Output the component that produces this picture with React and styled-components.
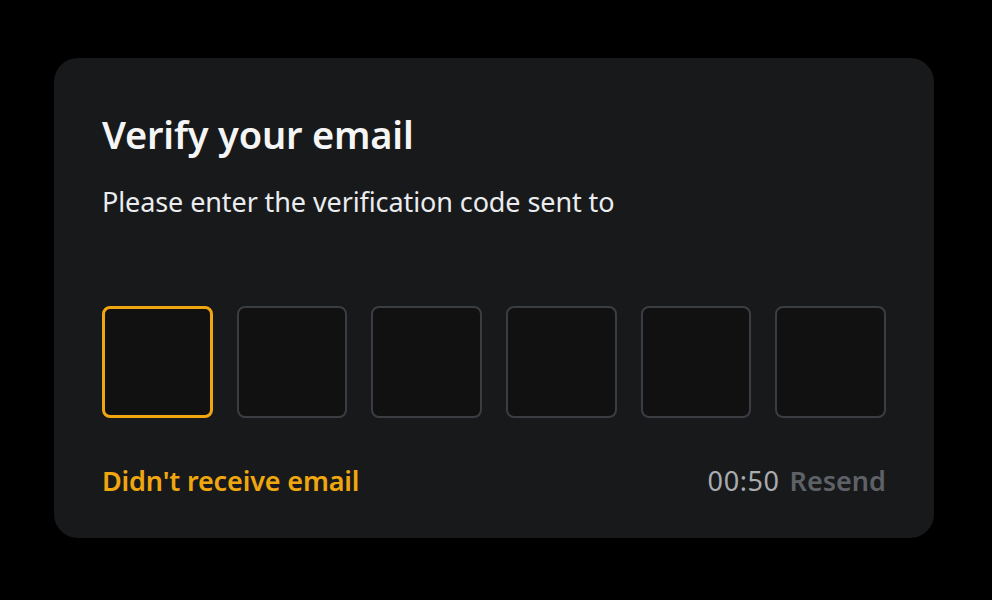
import React from "react";
import styled, { createGlobalStyle } from "styled-components";

const GlobalStyle = createGlobalStyle`
  html, body {
    margin: 0;
    padding: 0;
    background: #000;
  }
  body {
    font-family: "Noto Sans", "Open Sans", sans-serif;
  }
`;

const Page = styled.div`
  width: 992px;
  height: 600px;
  box-sizing: border-box;
  padding: 58px 58px 62px 54px;
  background: #000;
`;

const Card = styled.div`
  width: 880px;
  height: 480px;
  box-sizing: border-box;
  padding: 52px 48px 0 48px;
  background: #18191b;
  border-radius: 24px;
  display: flex;
  flex-direction: column;
`;

const Title = styled.h2`
  margin: 0;
  font-size: 38px;
  line-height: 48px;
  font-weight: 600;
  color: #f5f5f5;
  letter-spacing: -0.2px;
`;

const Subtitle = styled.p`
  margin: 26px 0 0 0;
  font-size: 27px;
  line-height: 36px;
  font-weight: 400;
  color: #eaecef;
  letter-spacing: -0.1px;
`;

const CodeRow = styled.div`
  margin-top: 86px;
  display: grid;
  grid-template-columns: repeat(6, 1fr);
  gap: 24px;
`;

const CodeBox = styled.input`
  box-sizing: border-box;
  height: 112px;
  width: 100%;
  margin: 0;
  background: #111111;
  border: ${(p) => (p.$active ? "3px solid #f0a70f" : "2px solid #3a3d41")};
  border-radius: 8px;
  color: #eaecef;
  font-size: 32px;
  text-align: center;
  outline: none;
`;

const Footer = styled.div`
  margin-top: 45px;
  display: flex;
  justify-content: space-between;
  align-items: center;
  font-size: 27px;
  line-height: 36px;
`;

const Link = styled.a`
  color: #f0a70f;
  font-weight: 600;
  letter-spacing: -0.15px;
  text-decoration: none;
  cursor: pointer;
`;

const Timer = styled.div`
  display: flex;
  gap: 10px;
  align-items: baseline;
`;

const Count = styled.span`
  color: #a8abb0;
  font-weight: 400;
  letter-spacing: 0.6px;
`;

const Resend = styled.span`
  color: #5e6166;
  font-weight: 600;
`;

export default function App() {
  const slots = [0, 1, 2, 3, 4, 5];
  return (
    <>
      <GlobalStyle />
      <Page>
        <Card>
          <Title>Verify your email</Title>
          <Subtitle>Please enter the verification code sent to</Subtitle>
          <CodeRow>
            {slots.map((i) => (
              <CodeBox key={i} $active={i === 0} maxLength={1} />
            ))}
          </CodeRow>
          <Footer>
            <Link>Didn't receive email</Link>
            <Timer>
              <Count>00:50</Count>
              <Resend>Resend</Resend>
            </Timer>
          </Footer>
        </Card>
      </Page>
    </>
  );
}
